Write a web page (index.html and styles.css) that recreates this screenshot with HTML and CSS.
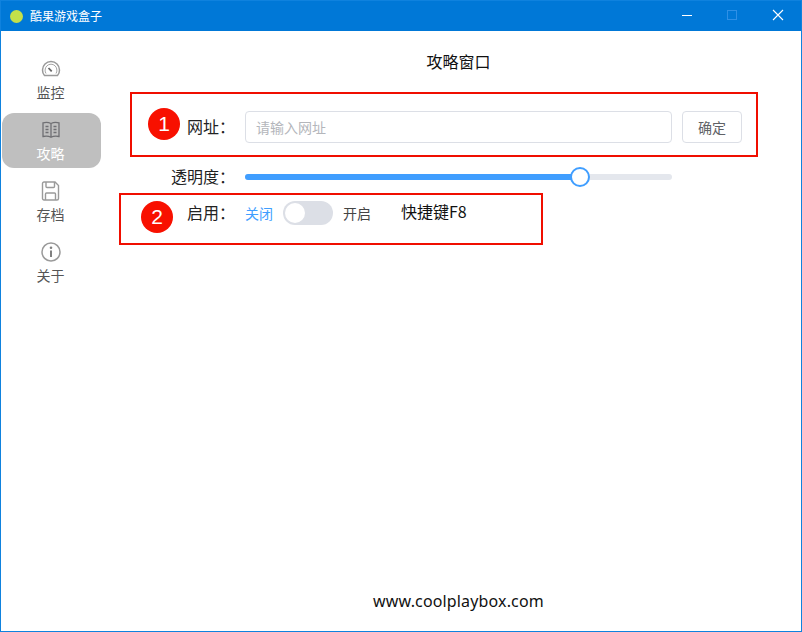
FILE: index.html
```html
<!DOCTYPE html>
<html lang="zh-CN">
<head>
<meta charset="utf-8">
<title>酷果游戏盒子</title>
<link rel="stylesheet" href="styles.css">
</head>
<body>
<div class="window">
  <header class="titlebar">
    <span class="logo"></span>
    <span class="app-name">酷果游戏盒子</span>
    <div class="controls">
      <svg class="ctl" width="46" height="30" viewBox="0 0 46 30"><path d="M19 15.500h10" stroke="#fff" fill="none"/></svg>
      <svg class="ctl" width="46" height="30" viewBox="0 0 46 30"><rect x="18.500" y="10.500" width="9" height="9" stroke="#2f90e6" fill="none"/></svg>
      <svg class="ctl" width="46" height="30" viewBox="0 0 46 30"><path d="M18 10l10 10M28 10L18 20" stroke="#fff" stroke-width="1.100" fill="none"/></svg>
    </div>
  </header>
  <div class="body">
    <nav class="sidebar">
      <div class="nav-item">
        <svg class="nav-icon" width="20" height="20" viewBox="0 0 20 20" fill="none" stroke="#9a9a9a" stroke-width="1.500"><path d="M3.500 16.500A8 8 0 0 1 1.500 11a8.500 8.500 0 0 1 17 0 8 8 0 0 1-2 5.500z"/><path d="M5 14.500a6 6 0 0 1-.9-3.400 5.900 5.900 0 0 1 11.800 0 6 6 0 0 1-.9 3.400" stroke-width=".9"/><path d="M7.500 9l3.200 3.400" stroke="#666" stroke-width="1.800"/></svg>
        <span>监控</span>
      </div>
      <div class="nav-item active">
        <svg class="nav-icon" width="20" height="20" viewBox="0 0 20 20" fill="none" stroke="#6f6f73" stroke-width="1.300"><path d="M10 3.500C8 2.500 4.500 2.300 2 2.800V16.500C4.500 16 8 16.200 10 17.300 12 16.200 15.500 16 18 16.500V2.800C15.500 2.300 12 2.500 10 3.500zM10 3.500V17.300"/><path d="M4.500 6.500h3M4.500 9.500h3M4.500 12.500h3M12.500 6.500h3M12.500 9.500h3M12.500 12.500h3"/></svg>
        <span>攻略</span>
      </div>
      <div class="nav-item">
        <svg class="nav-icon" width="20" height="20" viewBox="0 0 20 20" fill="none" stroke="#9a9a9a" stroke-width="1.400"><path d="M1.500 2.500a1.500 1.500 0 0 1 1.500-1.500h11l3.500 3.500v13a1.500 1.500 0 0 1-1.500 1.500H3a1.500 1.500 0 0 1-1.500-1.500z"/><path d="M5 1v4.500a1 1 0 0 0 1 1h6.500a1 1 0 0 0 1-1V1"/><path d="M4.500 19v-6a1 1 0 0 1 1-1h8a1 1 0 0 1 1 1v6"/></svg>
        <span>存档</span>
      </div>
      <div class="nav-item">
        <svg class="nav-icon" width="20" height="20" viewBox="0 0 20 20" fill="none" stroke="#9a9a9a" stroke-width="1.500"><circle cx="10" cy="10" r="9"/><path d="M10 8.500v6.500" stroke="#808080" stroke-width="2"/><circle cx="10" cy="5.700" r="1.300" fill="#808080" stroke="none"/></svg>
        <span>关于</span>
      </div>
    </nav>
    <main class="main">
      <h1 class="page-title">攻略窗口</h1>
      <div class="row row-url">
        <label class="label">网址：</label>
        <input class="url-input" type="text" placeholder="请输入网址">
        <button class="confirm">确定</button>
      </div>
      <div class="row row-slider">
        <label class="label">透明度：</label>
        <div class="slider">
          <div class="slider-fill"></div>
          <div class="slider-thumb"></div>
        </div>
      </div>
      <div class="row row-switch">
        <label class="label">启用：</label>
        <span class="sw-off">关闭</span>
        <span class="switch"><span class="knob"></span></span>
        <span class="sw-on">开启</span>
        <span class="hotkey">快捷键F8</span>
      </div>
      <footer class="site">www.coolplaybox.com</footer>
    </main>
  </div>
  <div class="note note-1"><span class="badge badge-1">1</span></div>
  <div class="note note-2"><span class="badge badge-2">2</span></div>
</div>
</body>
</html>
```
FILE: styles.css
```css
* { box-sizing: border-box; }
html, body { margin: 0; padding: 0; }
body {
  width: 802px;
  height: 632px;
  overflow: hidden;
  background: #fff;
  font-family: "Noto Sans CJK SC", "Liberation Sans", sans-serif;
  font-size: 14px;
  color: #333;
}
.window {
  position: relative;
  width: 802px;
  height: 632px;
  display: flex;
  flex-direction: column;
  border: 1px solid #0f82de;
}
.titlebar {
  height: 30px;
  flex: none;
  background: #0078d7;
  display: flex;
  align-items: center;
  padding-left: 9px;
  color: #fff;
}
.logo {
  width: 13px;
  height: 13px;
  border-radius: 50%;
  background: #c3e04a;
}
.app-name {
  margin-left: 7px;
  font-size: 12px;
  line-height: 30px;
}
.controls {
  margin-left: auto;
  display: flex;
  position: relative;
  top: -1px;
}
.ctl { display: block; }
.body {
  flex: 1;
  display: flex;
  min-height: 0;
}
.sidebar {
  width: 115px;
  flex: none;
  padding: 21px 15px 0 1px;
  display: flex;
  flex-direction: column;
  gap: 6px;
}
.nav-item {
  height: 55px;
  border-radius: 12px;
  display: flex;
  flex-direction: column;
  align-items: center;
  padding: 7px 2px 0 0;
  color: #555;
  font-size: 14px;
  line-height: 20px;
}
.nav-item span { margin-top: 3px; }
.nav-item.active { background: #bfbfbf; color: #fff; }
.nav-icon { display: block; flex: none; }
.main {
  flex: 1;
  display: flex;
  flex-direction: column;
  min-width: 0;
}
.page-title {
  margin: 19px 0 0;
  text-align: center;
  font-size: 16px;
  font-weight: 400;
  line-height: 22px;
  color: #111;
}
.row {
  display: flex;
  align-items: center;
}
.label {
  width: 119px;
  flex: none;
  text-align: right;
  font-size: 16px;
  color: #222;
  margin-right: 10px;
  padding-bottom: 2px;
}
.row-url { margin-top: 39px; height: 32px; }
.url-input {
  width: 427px;
  height: 32px;
  border: 1px solid #dcdfe6;
  border-radius: 4px;
  padding: 0 10px;
  font: 14px "Noto Sans CJK SC", sans-serif;
  outline: none;
}
.url-input::placeholder { color: #b4b6bb; }
.confirm {
  width: 60px;
  height: 32px;
  margin-left: 10px;
  border: 1px solid #dcdfe6;
  border-radius: 4px;
  background: #fff;
  color: #606266;
  font: 14px "Noto Sans CJK SC", sans-serif;
  padding: 0;
}
.row-slider { margin-top: 20px; height: 28px; }
.slider {
  position: relative;
  width: 427px;
  height: 6px;
  border-radius: 3px;
  background: #e4e7ed;
}
.slider-fill {
  width: 335px;
  height: 6px;
  border-radius: 3px;
  background: #409eff;
}
.slider-thumb {
  position: absolute;
  left: 325px;
  top: -7px;
  width: 20px;
  height: 20px;
  border-radius: 50%;
  border: 2px solid #409eff;
  background: #fff;
}
.row-switch { margin-top: 10px; height: 24px; }
.sw-off { color: #409eff; font-size: 14px; }
.switch {
  width: 50px;
  height: 24px;
  margin-left: 10px;
  border-radius: 12px;
  background: #dcdfe6;
  padding: 2px;
  display: block;
}
.knob {
  display: block;
  width: 20px;
  height: 20px;
  border-radius: 50%;
  background: #fff;
}
.sw-on { margin-left: 10px; font-size: 14px; color: #444; }
.hotkey { margin-left: 30px; font-size: 16px; color: #111; padding-bottom: 4px; }
.site {
  margin-top: auto;
  margin-bottom: 19px;
  text-align: center;
  font-family: "Noto Sans", sans-serif;
  font-size: 16px;
  letter-spacing: .15px;
  line-height: 22px;
  color: #111;
}
.note {
  position: absolute;
  border: 2px solid #f00e00;
  display: flex;
  align-items: center;
}
.note-1 { left: 129px; top: 91px; width: 628px; height: 65px; }
.note-2 { left: 118px; top: 192px; width: 424px; height: 52px; }
.badge {
  position: absolute;
  width: 32px;
  height: 32px;
  border-radius: 50%;
  background: #f81000;
  color: #fff;
  font-family: "Liberation Sans", sans-serif;
  font-size: 21px;
  line-height: 32px;
  text-align: center;
}
.badge-1 { left: 16px; top: 14px; }
.badge-2 { left: 20px; top: 6px; }
```
